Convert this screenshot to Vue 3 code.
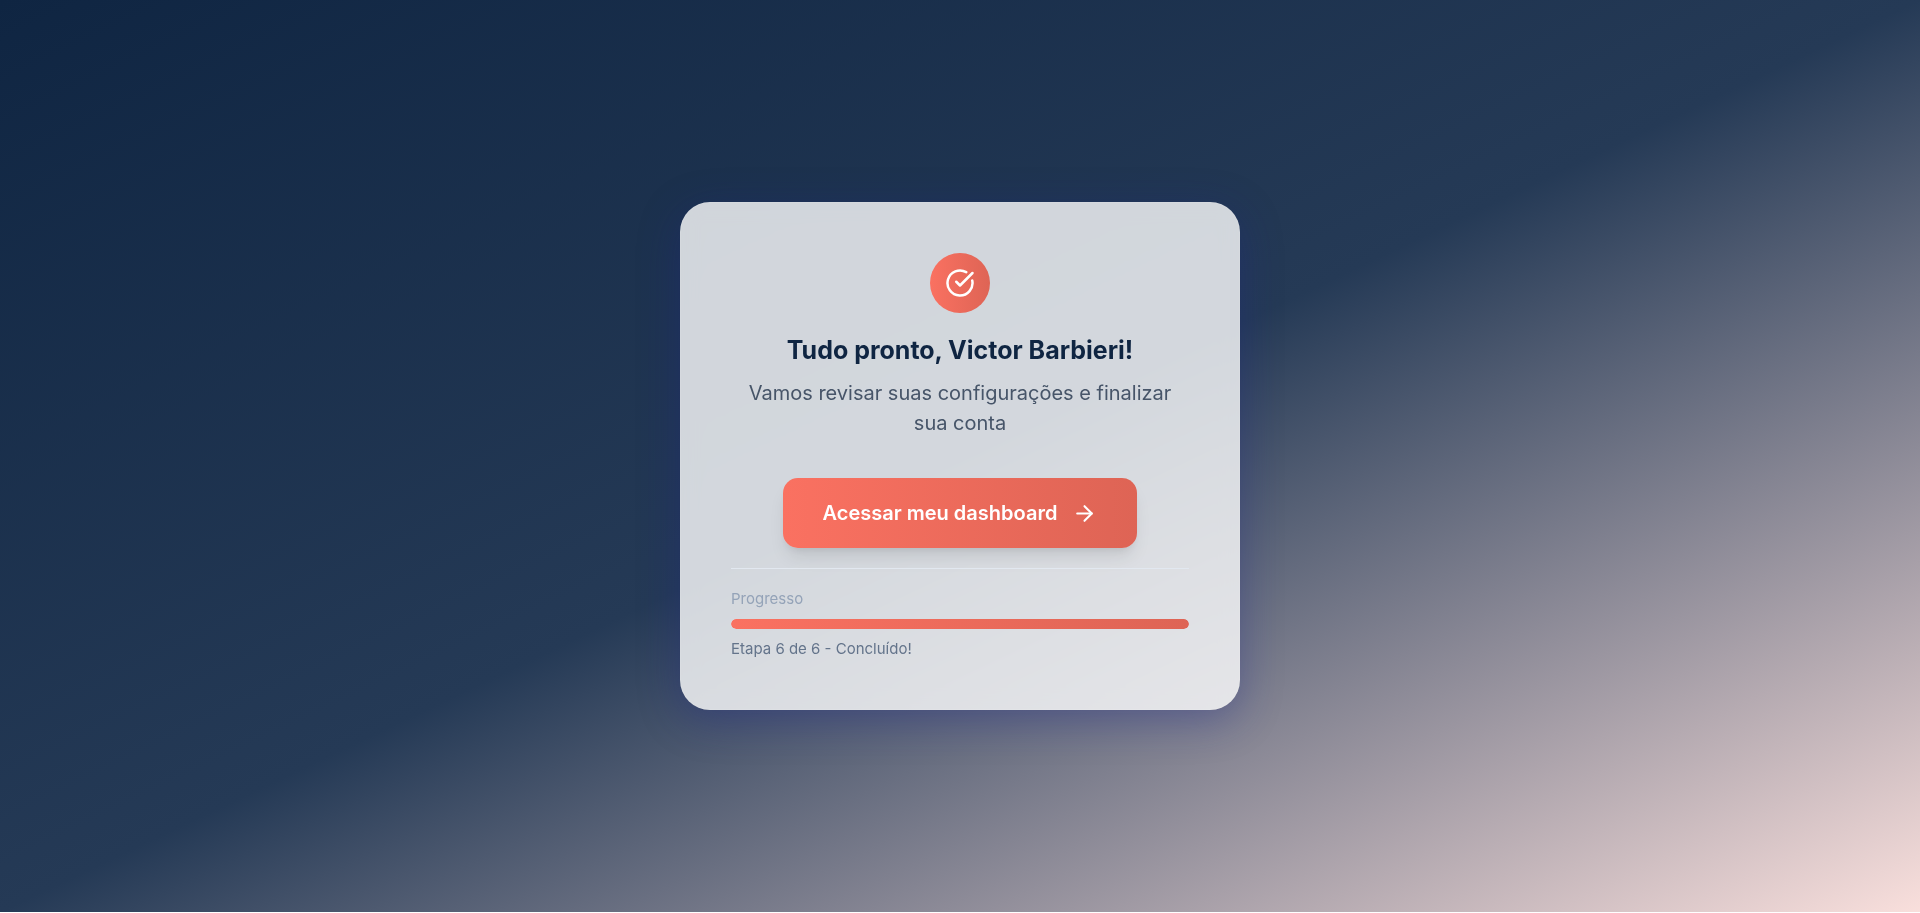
<script setup>
const userName = 'Victor Barbieri'
const currentStep = 6
const totalSteps = 6
</script>

<template>
  <main class="screen">
    <section class="card">
      <header class="intro">
        <div class="badge">
          <svg class="badge-icon" viewBox="0 0 24 24" aria-hidden="true">
            <path d="M21.801 10A10 10 0 1 1 17 3.335" />
            <path d="m9 11 3 3L22 4" />
          </svg>
        </div>
        <h1 class="title">Tudo pronto, {{ userName }}!</h1>
        <p class="subtitle">Vamos revisar suas configurações e finalizar sua conta</p>
      </header>

      <button type="button" class="action">
        <span>Acessar meu dashboard</span>
        <svg class="action-icon" viewBox="0 0 24 24" aria-hidden="true">
          <path d="M5 12h14" />
          <path d="m12 5 7 7-7 7" />
        </svg>
      </button>

      <footer class="status">
        <label class="status-label" for="setup-progress">Progresso</label>
        <progress id="setup-progress" class="bar" :value="currentStep" :max="totalSteps"></progress>
        <p class="status-step">Etapa {{ currentStep }} de {{ totalSteps }} - Concluído!</p>
      </footer>
    </section>
  </main>
</template>

<style>
body {
  margin: 0;
  background: #ffffff;
}
</style>

<style scoped>
.screen {
  box-sizing: border-box;
  min-height: calc(100vh - 1px);
  display: flex;
  align-items: center;
  justify-content: center;
  padding: 20px;
  font-family: Inter, "Liberation Sans", sans-serif;
  background: linear-gradient(to bottom right, #0f2542 0%, #253a56 50%, #f9dfdc 100%);
}

.card {
  box-sizing: border-box;
  width: 100%;
  max-width: 560px;
  padding: 50px;
  display: flex;
  flex-direction: column;
  align-items: center;
  border: 1px solid rgba(255, 255, 255, 0.08);
  border-radius: 30px;
  background: rgba(255, 255, 255, 0.8);
  backdrop-filter: blur(10px);
  box-shadow: 0 10px 40px rgba(31, 38, 135, 0.37);
}

.intro {
  display: flex;
  flex-direction: column;
  align-items: center;
  text-align: center;
  margin-bottom: 40px;
}

.badge {
  width: 60px;
  height: 60px;
  display: flex;
  align-items: center;
  justify-content: center;
  margin-bottom: 20px;
  border-radius: 50%;
  background: linear-gradient(to right, #fa7161, #de6455);
}

.badge-icon,
.action-icon {
  fill: none;
  stroke: #ffffff;
  stroke-width: 2;
  stroke-linecap: round;
  stroke-linejoin: round;
}

.badge-icon {
  width: 30px;
  height: 30px;
}

.title {
  margin: 0 0 10px;
  font-size: 25px;
  line-height: 35px;
  font-weight: 700;
  color: #0f2542;
}

.subtitle {
  margin: 0;
  font-size: 20px;
  line-height: 30px;
  color: #475569;
}

.action {
  height: 70px;
  display: flex;
  align-items: center;
  gap: 15px;
  padding: 0 40px;
  border: 0;
  border-radius: 15px;
  background: linear-gradient(to right, #fa7161, #de6455);
  box-shadow: 0 12px 18px -4px rgba(0, 0, 0, 0.1), 0 5px 8px -5px rgba(0, 0, 0, 0.1);
  font-family: inherit;
  font-size: 20px;
  line-height: 30px;
  font-weight: 600;
  color: #ffffff;
  cursor: pointer;
}

.action-icon {
  width: 25px;
  height: 25px;
}

.status {
  width: 100%;
  box-sizing: border-box;
  display: flex;
  flex-direction: column;
  gap: 10px;
  margin-top: 20px;
  padding-top: 20px;
  border-top: 1px solid #e2e8f0;
  font-size: 15px;
  line-height: 20px;
}

.status-label {
  color: #94a3b8;
}

.bar {
  appearance: none;
  display: block;
  width: 100%;
  height: 10px;
  border: 0;
  border-radius: 5px;
  overflow: hidden;
  background: #e2e8f0;
}

.bar::-webkit-progress-bar {
  background: #e2e8f0;
}

.bar::-webkit-progress-value {
  border-radius: 5px;
  background: linear-gradient(to right, #fa7161, #de6455);
}

.status-step {
  margin: 0;
  color: #64748b;
}
</style>
